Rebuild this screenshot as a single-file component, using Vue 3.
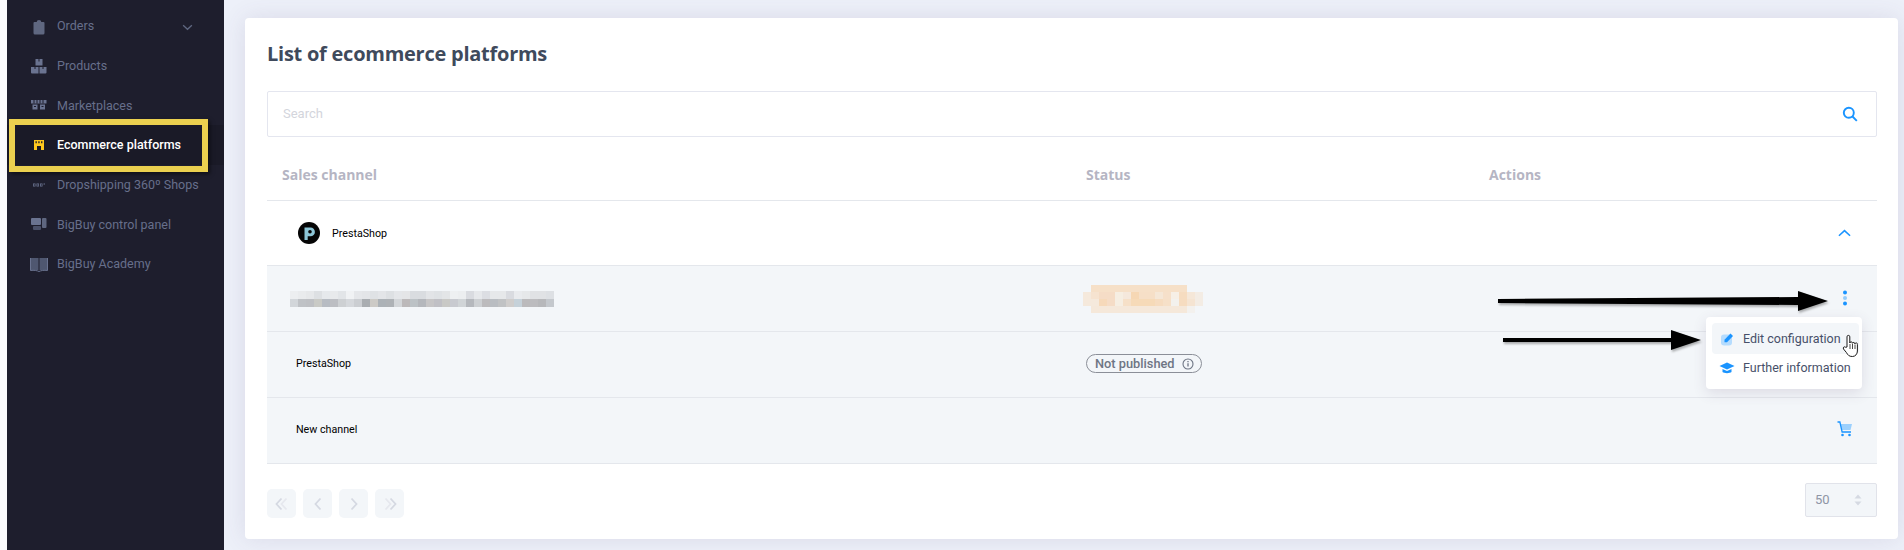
<template>
  <div class="page">
    <div class="strip"></div>
    <aside class="sidebar">
      <div v-for="item in menu" :key="item.label" class="nav-item" :class="{ active: item.active }">
        <svg class="nav-icon" viewBox="0 0 18 18" v-html="item.icon"></svg>
        <span class="nav-label">{{ item.label }}</span>
        <svg v-if="item.caret" class="caret" viewBox="0 0 12 8"><path d="M1 1.500l5 4.500 5-4.500" fill="none" stroke="#5f6780" stroke-width="1.500" /></svg>
        <div v-if="item.active" class="highlight"></div>
      </div>
    </aside>

    <main class="content">
      <section class="card">
        <h1 class="title">List of ecommerce platforms</h1>

        <div class="search">
          <span class="placeholder">Search</span>
          <svg class="search-icon" viewBox="0 0 16 16"><circle cx="6.800" cy="6.800" r="5" fill="none" stroke="#1a94ff" stroke-width="1.900" /><path d="M10.500 10.500l4.300 4.300" stroke="#1a94ff" stroke-width="1.900" /></svg>
        </div>

        <div class="row head">
          <span>Sales channel</span>
          <span>Status</span>
          <span>Actions</span>
        </div>

        <div class="row group">
          <div class="channel">
            <svg class="logo" viewBox="0 0 22 22">
              <circle cx="11" cy="11" r="11" fill="#050505" />
              <path d="M6.500 18V5.500h6a4.300 4.300 0 0 1 0 8.800h-2.800V18z" fill="#8cc5d6" />
              <circle cx="12" cy="9.800" r="1.800" fill="#050505" />
            </svg>
            <span>PrestaShop</span>
          </div>
          <span></span>
          <div class="action-cell">
            <svg class="chevron" viewBox="0 0 14 8"><path d="M1 7l6-5.500L13 7" fill="none" stroke="#1a94ff" stroke-width="1.700" /></svg>
          </div>
        </div>

        <div class="row sub">
          <div class="mosaic mosaic-grey">
            <i v-for="(c, i) in greyBlocks" :key="i" :style="{ background: c }"></i>
          </div>
          <div class="mosaic mosaic-orange">
            <i v-for="(c, i) in orangeBlocks" :key="i" :style="{ background: c }"></i>
          </div>
          <div class="action-cell">
            <svg class="kebab" viewBox="0 0 6 16">
              <circle cx="3" cy="2.500" r="2" fill="#1a94ff" />
              <circle cx="3" cy="8" r="2" fill="#93cbfb" />
              <circle cx="3" cy="13.500" r="2" fill="#1a94ff" />
            </svg>
          </div>
          <svg class="arrow arrow-one" viewBox="0 0 330 22"><path d="M0 9l300-2V1l30 10-30 10v-6L0 13z" fill="#000" /></svg>
          <svg class="arrow arrow-two" viewBox="0 0 198 22"><path d="M0 9h168V1l30 10-30 10v-8H0z" fill="#000" /></svg>

          <div class="dropdown">
            <div class="drop-item hover">
              <svg viewBox="0 0 16 16">
                <rect x="2" y="3.500" width="11" height="11" rx="3" fill="#b5dcfe" />
                <path d="M5.500 8.800L11.500 2.500l2.500 2.500-6 6.200H5.500z" fill="#1a94ff" />
              </svg>
              <span>Edit configuration</span>
            </div>
            <div class="drop-item">
              <svg viewBox="0 0 16 16">
                <path d="M8 2.500L0.500 6 8 9.500 15.500 6z" fill="#1a94ff" />
                <path d="M3.500 9v3c1.500 1.500 7.500 1.500 9 0V9L8 11z" fill="#1a94ff" />
              </svg>
              <span>Further information</span>
            </div>
            <svg class="hand" viewBox="0 0 18 24">
              <path d="M5 13V2.800a1.400 1.400 0 0 1 2.800 0V9a1.300 1.300 0 0 1 2.600 0.300 1.300 1.300 0 0 1 2.500 0.500 1.300 1.300 0 0 1 2.500 0.700V17c0 3-2 5.500-5 5.500-3.500 0-4.500-1.500-6-4L1.500 15c-1-1.500 1-3 2.200-1.700z" fill="#fff" stroke="#1a1a1a" stroke-width="1" />
              <path d="M8 10v5M10.500 10v5M13 10.500V15" stroke="#1a1a1a" stroke-width="0.800" fill="none" />
            </svg>
          </div>
        </div>

        <div class="row sub">
          <div class="sub-name">PrestaShop</div>
          <div>
            <span class="badge">
              Not published
              <svg viewBox="0 0 12 12"><circle cx="6" cy="6" r="5" fill="none" stroke="#6e7584" stroke-width="1.100" /><path d="M6 5.200v3.300M6 3v1.200" stroke="#6e7584" stroke-width="1.300" /></svg>
            </span>
          </div>
          <span></span>
        </div>

        <div class="row sub">
          <div class="sub-name">New channel</div>
          <span></span>
          <div class="action-cell">
            <svg class="cart" viewBox="0 0 16 16">
              <path d="M3.500 3H15l-1.500 6H4.500z" fill="#9bd0fd" />
              <path d="M0.500 1h2.400l2.200 10H14" fill="none" stroke="#1a94ff" stroke-width="1.300" />
              <circle cx="5.500" cy="14" r="1.300" fill="#1a94ff" />
              <circle cx="12.500" cy="14" r="1.300" fill="#1a94ff" />
            </svg>
          </div>
        </div>

        <div class="footer">
          <div class="pager">
            <button v-for="p in pager" :key="p.d" type="button">
              <svg viewBox="0 0 16 14">
                <path v-if="p.back" :d="p.back" fill="none" stroke="#e6e8ee" stroke-width="1.800" />
                <path :d="p.d" fill="none" stroke="#d5d9e2" stroke-width="1.800" />
              </svg>
            </button>
          </div>
          <div class="page-size">
            <span>50</span>
            <svg viewBox="0 0 8 12"><path d="M4 0.500L7.500 4.500h-7zM4 11.500L0.500 7.500h7z" fill="#d5d9e2" /></svg>
          </div>
        </div>
      </section>
    </main>
  </div>
</template>

<script setup>
const menu = [
  { label: 'Orders', caret: true, icon: '<path d="M4.500 5h2.200a2.300 2 0 0 1 4.600 0h2.200a1 1 0 0 1 1 1v10a1.500 1.500 0 0 1-1.500 1.500h-8A1.500 1.500 0 0 1 3.500 16V6a1 1 0 0 1 1-1z" fill="#5f6780"/>' },
  { label: 'Products', icon: '<path d="M5.500 2h7v6.500h-7zM1 10h7.500v6.500H2a1 1 0 0 1-1-1zM9.500 10H16.500v5.500a1 1 0 0 1-1 1h-6z" fill="#6a7390"/><path d="M8.500 2v2.500h1V2M4.500 10v2h1v-2M12.500 10v2h1v-2" fill="#1e1e2d"/>' },
  { label: 'Marketplaces', icon: '<path d="M1 4h15.500v3.500H1zM2.500 8.500h5v5h-5zM10 8.500h5v5h-5z" fill="#6a7390"/><path d="M4 4v3.500M7 4v3.500M10 4v3.500M13 4v3.500M4 10.500h2M11.500 10.500h2" stroke="#1e1e2d" stroke-width="1"/>' },
  { label: 'Ecommerce platforms', active: true, icon: '<path d="M4 4h10v10h-3v-4H7v4H4z" fill="#ffc81e"/><path d="M5.500 5.200h1.300v2H5.500zM8.300 5.200h1.300v2H8.300zM11.100 5.200h1.300v2h-1.300z" fill="#1a1a27"/>' },
  { label: 'Dropshipping 360º Shops', icon: '<path d="M3 7.500h2.500v3H3zM6.500 7.500H9v3H6.500zM10 7.500h2.500v3H10zM13.500 7.500h1.500v1h-1.500z" fill="#6a7390"/><path d="M3.800 8.300h1v1.400h-1zM7.300 8.300h1v1.400h-1zM10.800 8.300h1v1.400h-1z" fill="#1e1e2d"/>' },
  { label: 'BigBuy control panel', icon: '<rect x="1" y="3" width="10" height="7" rx="1" fill="#6a7390"/><rect x="12" y="3" width="4.500" height="10" rx="1" fill="#5f6780"/><rect x="3" y="11" width="8" height="4" rx="1" fill="#4a5068"/>' },
  { label: 'BigBuy Academy', icon: '<path d="M1 3h7.500v12H1zM9.500 3H17v12H9.500z" fill="#4f5770"/><path d="M0.500 3v12.500C4 15 7 15.500 9 16.500c2-1 5-1.500 8.500-1V3" fill="none" stroke="#6a7390" stroke-width="1"/>' },
]

const pager = [
  { d: 'M7.500 1.500L2.500 7l5 5.500', back: 'M12.500 1.500L7.500 7l5 5.500' },
  { d: 'M10.500 1.500L5.500 7l5 5.500' },
  { d: 'M5.500 1.500l5 5.500-5 5.500' },
  { d: 'M8.500 1.500l5 5.500-5 5.500', back: 'M3.500 1.500l5 5.500-5 5.500' },
]

const greyTop = ['#eceef0', '#e9ebed', '#e6e8ea', '#dde0e3', '#e6e9ec', '#e8eaec', '#e2e5e8', '#f0f2f4', '#e5e7ea', '#e3e5e8', '#dfe2e5', '#e3e5e8', '#dde0e3', '#e4e6e9', '#e4e5e7', '#d9dce0', '#d9dce0', '#e2e4e7', '#dfe2e5', '#e3e5e7', '#eef0f2', '#eceef0', '#d9dbe0', '#e6e8eb', '#dcdee3', '#e6e8ea', '#e6e8ea', '#d9dbe0', '#e9ebee', '#e6e8ea', '#e0e2e5', '#e0e2e5', '#dde0e4']
const greyBottom = ['#d2d6da', '#bfc2c6', '#bec0c4', '#c9cac6', '#b7bcc3', '#bcbec3', '#cdd0d3', '#d5d8dc', '#cbced2', '#a9adb1', '#cccac6', '#acb2b7', '#aeb2b6', '#d3d6d9', '#bcb9ba', '#bcc2c6', '#b4b7bc', '#c6c5c6', '#c0c0c5', '#c9c9c6', '#c8cad0', '#d0d4d7', '#b5b8bd', '#cdd0d3', '#bcbbbd', '#b9bdc2', '#c0c2c4', '#cfcdcc', '#c5d1d9', '#bbbabc', '#bcbcbf', '#b7b8bb', '#c4c8cd']
const greyBlocks = [...greyTop, ...greyBottom]

const orangeBlocks = [
  '#f3f6f9', '#f6e0c8', '#f6e0c8', '#f6e0c8', '#f6e0c8', '#f6e0c8', '#f6e0c8', '#f6e0c8', '#f6e0c8', '#f6e0c8', '#f6e0c8', '#f6e0c8', '#f6e0c8', '#f3f6f9', '#f3f6f9',
  '#f5e9dc', '#f6e3d0', '#f5dcc6', '#f5dcc6', '#f6eee2', '#f5e8dc', '#f6d7b4', '#f6dfc7', '#f6dfc7', '#f5e7d7', '#f6e0ca', '#f6efe6', '#f6dcc0', '#f5e7d8', '#f3ece4',
  '#f5e9dc', '#f5e9dc', '#f6d9ba', '#f5dcc6', '#f6eee2', '#f6e0c8', '#f6dab8', '#f6dab8', '#f6dab8', '#f6dcc0', '#f6e0c8', '#f3f1ed', '#f6dcc0', '#f5e4d2', '#f3ece4',
  '#f3f6f9', '#f5e8da', '#f5e8da', '#f5e8da', '#f5e8da', '#f5e8da', '#f5e8da', '#f5e8da', '#f5e8da', '#f5e8da', '#f5e8da', '#f5e8da', '#f5e8da', '#f3f1ee', '#f3f6f9',
]
</script>

<style>
html, body {
  margin: 0;
  background: #edf0f9;
}
</style>

<style scoped>
.page {
  display: flex;
  height: 550px;
  overflow: hidden;
  font-family: Roboto, "Liberation Sans", sans-serif;
}

.strip {
  width: 7px;
  flex: none;
  background: #fbfbfc;
}

.sidebar {
  width: 217px;
  flex: none;
  box-sizing: border-box;
  padding-top: 6px;
  background: #1e1e2d;
}

.nav-item {
  position: relative;
  display: flex;
  align-items: center;
  height: 39.7px;
  padding-left: 23px;
  color: #676f8b;
  font-size: 12.5px;
}

.nav-item.active {
  background: #1a1a27;
  color: #fff;
  font-weight: 500;
}

.nav-icon {
  width: 18px;
  height: 18px;
  flex: none;
  margin-right: 9px;
}

.caret {
  position: absolute;
  left: 175px;
  top: 18px;
  width: 11px;
  height: 7px;
}

.highlight {
  position: absolute;
  left: 2px;
  top: -6px;
  width: 199px;
  height: 53px;
  box-sizing: border-box;
  border: 6px solid #ebd04f;
  box-shadow: 2px 2px 4px rgba(0, 0, 0, 0.5);
}

.content {
  flex: 1;
  box-sizing: border-box;
  padding: 18px 6px 11px 21px;
}

.card {
  height: 100%;
  box-sizing: border-box;
  padding: 0 21px 0 22px;
  background: #fff;
  border-radius: 4px;
  box-shadow: 0 0 24px rgba(82, 63, 105, 0.12);
}

.title {
  margin: 0;
  padding-top: 24px;
  height: 73px;
  box-sizing: border-box;
  color: #3f4a5c;
  font-size: 20px;
  font-weight: 700;
  font-family: "Open Sans", Roboto, sans-serif;
  line-height: 24px;
  letter-spacing: -0.25px;
}

.search {
  display: flex;
  align-items: center;
  justify-content: space-between;
  height: 46px;
  box-sizing: border-box;
  padding: 0 18px 2px 12px;
  border: 1px solid #e4e6ef;
  border-radius: 2px;
}

.placeholder {
  color: #d3d5dc;
  font-size: 13px;
  padding-left: 3px;
}

.search-icon {
  width: 16px;
  height: 16px;
  margin-top: 2px;
}

.row {
  position: relative;
  display: grid;
  grid-template-columns: 804px 403px 1fr;
  align-items: center;
  box-sizing: border-box;
  border-bottom: 1px solid #e4e7ec;
}

.head {
  height: 64px;
  padding-top: 12px;
  color: #b5b5c3;
  font-size: 14px;
  font-weight: 700;
  font-family: "Open Sans", Roboto, sans-serif;
}

.head span {
  padding-left: 15px;
}

.group {
  height: 65px;
  color: #000;
  font-size: 10.700px;
}

.channel {
  display: flex;
  align-items: center;
  gap: 12px;
  padding-left: 31px;
}

.logo {
  width: 22px;
  height: 22px;
}

.action-cell {
  display: flex;
  justify-content: flex-end;
  padding-right: 27px;
}

.chevron {
  width: 13px;
  height: 8px;
  margin-right: -1px;
}

.sub {
  height: 66px;
  background: #f3f6f9;
  color: #000;
  font-size: 10.700px;
}

.sub-name {
  padding-left: 29px;
  padding-bottom: 2px;
}

.mosaic {
  display: grid;
}

.mosaic i {
  display: block;
}

.mosaic-grey {
  grid-template-columns: repeat(33, 8px);
  grid-auto-rows: 8px;
  margin-left: 23px;
}

.mosaic-orange {
  grid-template-columns: repeat(15, 8px);
  grid-auto-rows: 7px;
  margin-left: 12px;
}

.kebab {
  width: 6px;
  height: 16px;
  margin-right: 2px;
  margin-top: -2px;
}

.arrow {
  position: absolute;
  filter: drop-shadow(1px 2px 1px rgba(0, 0, 0, 0.3));
}

.arrow-one {
  left: 1231px;
  top: 24px;
  width: 330px;
  height: 22px;
}

.arrow-two {
  left: 1236px;
  top: 63px;
  width: 198px;
  height: 22px;
  z-index: 2;
}

.dropdown {
  position: absolute;
  left: 1439px;
  top: 51px;
  width: 156px;
  height: 72px;
  box-sizing: border-box;
  padding: 6px 3px 0 6px;
  background: #fff;
  border-radius: 4px;
  box-shadow: 0 4px 14px rgba(82, 63, 105, 0.14);
  z-index: 1;
}

.drop-item {
  display: flex;
  align-items: center;
  height: 27px;
  padding-left: 7px;
  color: #475069;
  font-size: 12.500px;
  white-space: nowrap;
}

.drop-item.hover {
  height: 31px;
  background: #f3f6f9;
  border-radius: 4px;
}

.drop-item svg {
  width: 16px;
  height: 16px;
  flex: none;
  margin-right: 8px;
}

.hand {
  position: absolute;
  left: 136px;
  top: 17px;
  width: 18px;
  height: 24px;
}

.badge {
  display: inline-flex;
  align-items: center;
  gap: 7px;
  height: 19px;
  box-sizing: border-box;
  margin-left: 15px;
  margin-bottom: 2px;
  padding: 0 7px 0 8px;
  border: 1px solid #8b8f98;
  border-radius: 10px;
  color: #6e7584;
  font-size: 12.800px;
  font-weight: 500;
}

.badge svg {
  width: 12px;
  height: 12px;
}

.cart {
  width: 16px;
  height: 16px;
  margin-right: -3px;
  margin-top: -3px;
}

.footer {
  display: flex;
  justify-content: space-between;
  padding-top: 19px;
}

.pager {
  display: flex;
  gap: 7px;
  padding-top: 6px;
}

.pager button {
  display: flex;
  align-items: center;
  justify-content: center;
  width: 29px;
  height: 29px;
  padding: 0;
  border: 0;
  border-radius: 5px;
  background: #f3f6f9;
}

.pager svg {
  width: 16px;
  height: 14px;
}

.page-size {
  display: flex;
  align-items: center;
  justify-content: space-between;
  width: 72px;
  height: 34px;
  box-sizing: border-box;
  padding: 0 14px 2px 9px;
  border: 1px solid #e1e3ea;
  border-radius: 2px;
  background: #f3f6f9;
  color: #8e95a5;
  font-size: 13px;
}

.page-size svg {
  width: 8px;
  height: 12px;
  margin-top: 2px;
}
</style>
